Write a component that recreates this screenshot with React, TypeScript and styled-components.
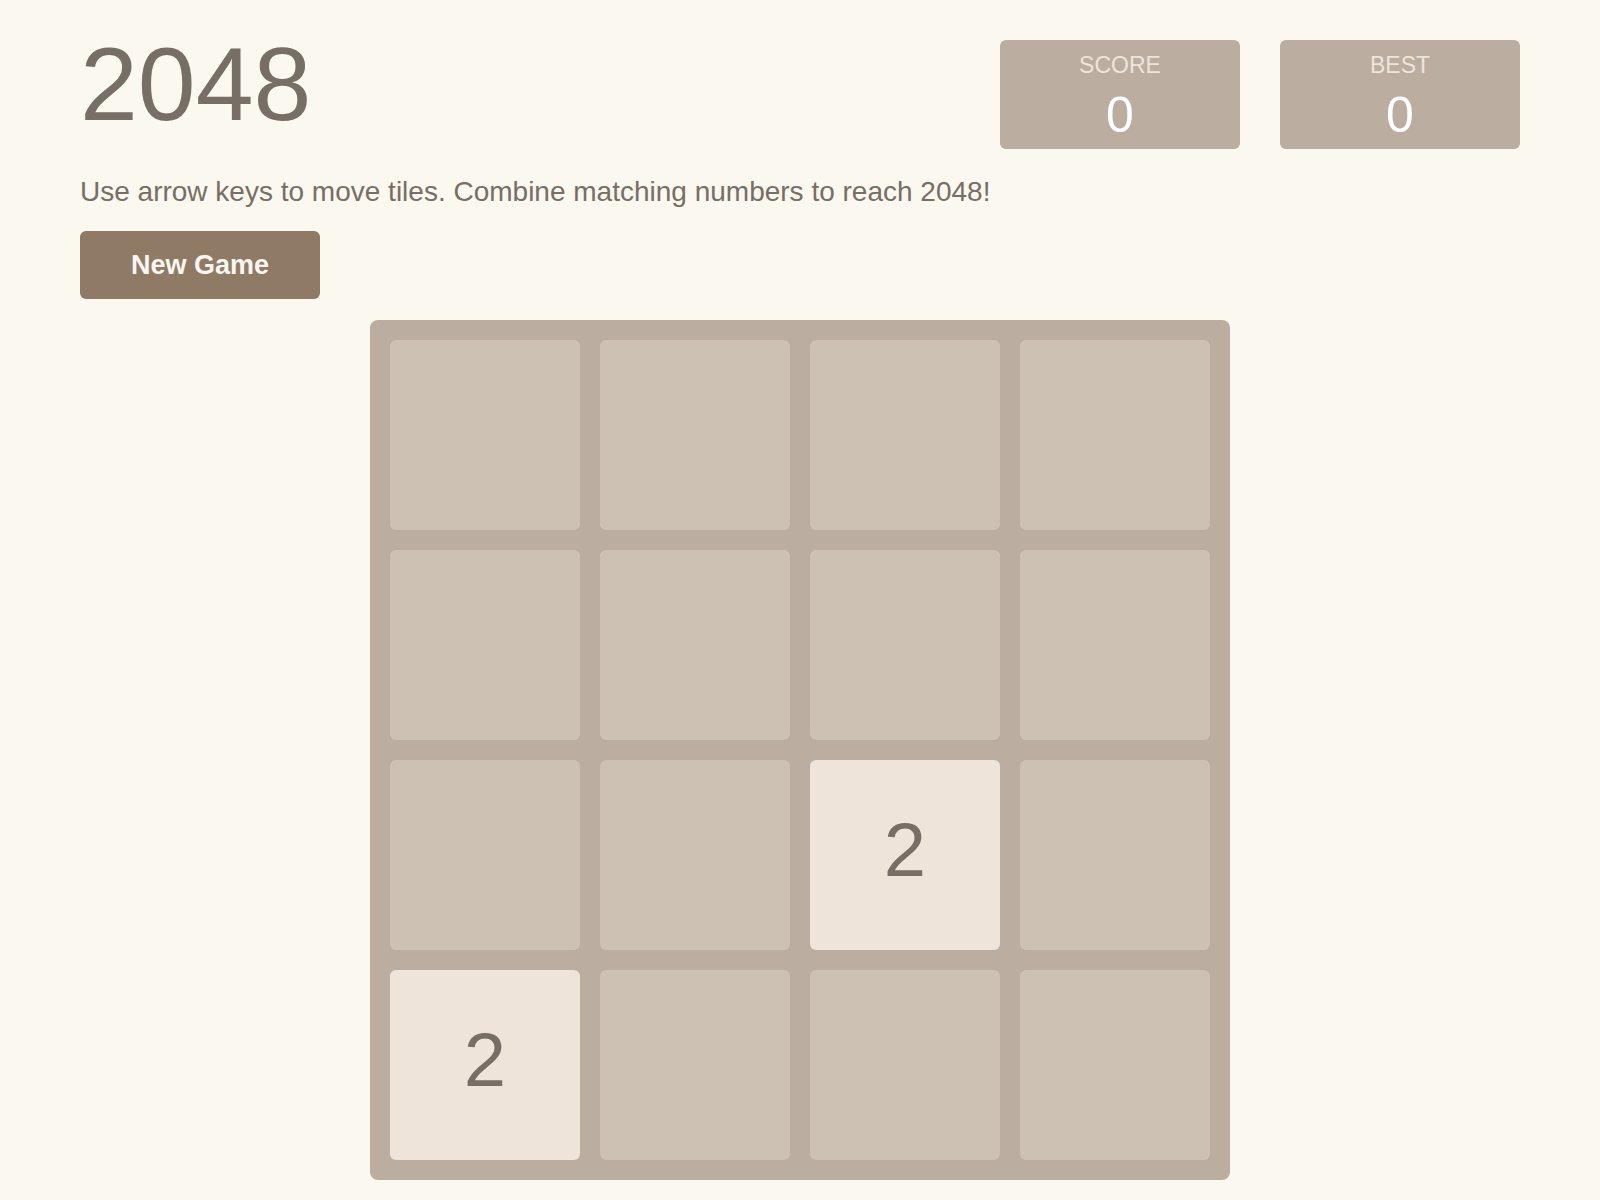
import styled, { createGlobalStyle } from "styled-components";

const GlobalStyle = createGlobalStyle`
	body {
		margin: 0;
		background-color: #faf8ef;
		font-family: "Liberation Sans", Arial, sans-serif;
	}
`;

const Page = styled.div`
	width: 1600px;
	box-sizing: border-box;
	padding: 40px 80px 20px;
`;

const Header = styled.div`
	display: flex;
	justify-content: space-between;
	align-items: flex-start;
	height: 108px;
`;

const Title = styled.h1`
	margin: 0;
	font-size: 104px;
	line-height: 0.85;
	font-weight: 400;
	color: #776e65;
`;

const Scores = styled.div`
	display: flex;
	gap: 40px;
`;

const ScoreBox = styled.div`
	width: 240px;
	height: 109px;
	box-sizing: border-box;
	padding-top: 13px;
	background-color: #bbada0;
	border-radius: 6px;
	display: flex;
	flex-direction: column;
	align-items: center;
`;

const ScoreLabel = styled.div`
	font-size: 23px;
	line-height: 25px;
	color: #eee4da;
	text-transform: uppercase;
`;

const ScoreValue = styled.div`
	margin-top: 9px;
	font-size: 50px;
	line-height: 56px;
	color: #ffffff;
`;

const Intro = styled.p`
	margin: 28px 0 0;
	font-size: 28px;
	line-height: 32px;
	color: #776e65;
`;

const NewGameButton = styled.button`
	display: block;
	margin-top: 23px;
	width: 240px;
	height: 68px;
	border: none;
	border-radius: 6px;
	background-color: #8f7a66;
	color: #f9f6f2;
	font-family: inherit;
	font-size: 27px;
	font-weight: 700;
	cursor: pointer;
`;

const Board = styled.div`
	margin: 21px auto 0;
	width: 860px;
	box-sizing: border-box;
	padding: 20px;
	background-color: #bbada0;
	border-radius: 8px;
	display: grid;
	grid-template-columns: repeat(4, 190px);
	grid-auto-rows: 190px;
	gap: 20px;
`;

const Tile = styled.div<{ $value: number }>`
	border-radius: 6px;
	background-color: ${(p) => (p.$value ? "#eee4da" : "#cdc1b4")};
	color: #776e65;
	font-size: 76px;
	display: flex;
	align-items: center;
	justify-content: center;
	box-sizing: border-box;
	padding-bottom: 12px;
`;

const grid = [
	[0, 0, 0, 0],
	[0, 0, 0, 0],
	[0, 0, 2, 0],
	[2, 0, 0, 0],
];

const App = () => {
	const score = 0;
	const best = 0;
	return (
		<Page>
			<GlobalStyle />
			<Header>
				<Title>2048</Title>
				<Scores>
					<ScoreBox>
						<ScoreLabel>Score</ScoreLabel>
						<ScoreValue>{score}</ScoreValue>
					</ScoreBox>
					<ScoreBox>
						<ScoreLabel>Best</ScoreLabel>
						<ScoreValue>{best}</ScoreValue>
					</ScoreBox>
				</Scores>
			</Header>
			<Intro>Use arrow keys to move tiles. Combine matching numbers to reach 2048!</Intro>
			<NewGameButton>New Game</NewGameButton>
			<Board>
				{grid.flat().map((v, i) => (
					<Tile key={i} $value={v}>
						{v ? v : ""}
					</Tile>
				))}
			</Board>
		</Page>
	);
};

export default App;
